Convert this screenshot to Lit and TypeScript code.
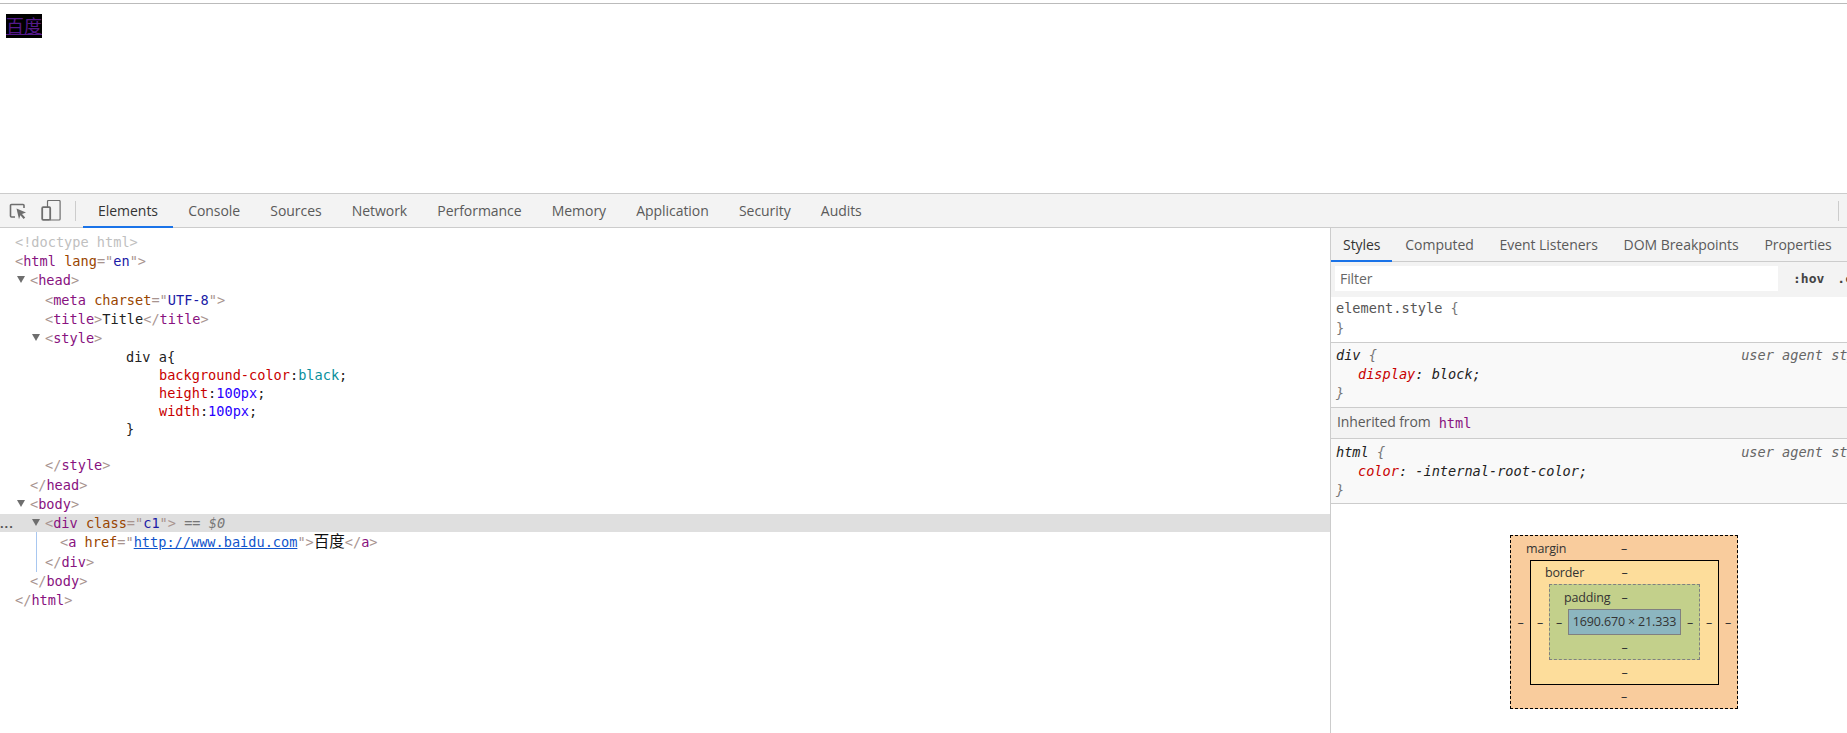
import { LitElement, html, css } from "lit";
import { customElement } from "lit/decorators.js";

const tag = (s: string) => html`<span class="b">&lt;</span><span class="n">${s}</span><span class="b">&gt;</span>`;
const end = (s: string) => html`<span class="b">&lt;/</span><span class="n">${s}</span><span class="b">&gt;</span>`;
const attr = (n: string, v: string) => html` <span class="an">${n}</span><span class="b">="</span><span class="av">${v}</span><span class="b">"</span>`;
const arrow = html`<i class="arrow"></i>`;

@customElement("app-root")
export class AppRoot extends LitElement {
  static styles = css`
    :host { display: block; height: 733px; overflow: hidden; background: #fff; font-family: "Open Sans", "Noto Sans", sans-serif; }
    .rule { margin-top: 3px; height: 1px; background: #bbb; }
    .page { height: 189px; padding: 10px 0 0 6px; box-sizing: border-box; }
    .link { display: inline-block; height: 24px; background: #000; color: #551a8b; text-decoration: underline; font: 18px/23px "Noto Sans CJK SC", sans-serif; }
    .toolbar { height: 35px; box-sizing: border-box; border-top: 1px solid #ccc; border-bottom: 1px solid #ccc; background: #f3f3f3; display: flex; align-items: stretch; }
    .icons { display: flex; align-items: center; gap: 14px; padding-left: 9px; width: 75px; box-sizing: border-box; }
    .sep { width: 1px; height: 20px; background: #ccc; align-self: center; }
    .tabs { display: flex; }
    .main-tabs { margin-left: 7px; flex: 1; }
    .tab { font-size: 14px; color: #5a5a5a; display: flex; align-items: center; box-sizing: border-box; border-bottom: 2px solid transparent; margin-bottom: -1px; white-space: nowrap; letter-spacing: -0.05px; }
    .main-tabs .tab { padding: 0 15.1px; }
    .tab.on { color: #333; border-bottom-color: #1a73e8; }
    .end-sep { margin-right: 8px; }
    .body { display: flex; height: 506px; }
    .tree { width: 1330px; flex: none; padding-top: 5px; box-sizing: border-box; font: 13.6px/19px "DejaVu Sans Mono", "Noto Sans CJK SC", monospace; color: #222; white-space: nowrap; }
    .r { height: 19.2px; line-height: 19.2px; padding-left: var(--p, 15px); position: relative; }
    .x { height: 18px; line-height: 18px; }
    .blank { height: 18.2px; }
    .sel { background: #dfdfdf; height: 18px; line-height: 18px; }
    .a2 { height: 20.8px; line-height: 20.8px; }
    .p1 { --p: 30px; }
    .p2 { --p: 45px; }
    .p3 { --p: 60px; }
    .p4 { --p: 126px; }
    .p5 { --p: 159px; }
    .guide { border-left: 1px solid #a8c7f0; margin-left: 36px; }
    .guide .r { padding-left: calc(var(--p) - 37px); }
    .arrow { position: absolute; width: 0; height: 0; border-left: 4.5px solid transparent; border-right: 4.5px solid transparent; border-top: 7px solid #6e6e6e; margin-left: -13px; margin-top: 5px; }
    .dots { position: absolute; left: 0; top: 1px; color: #555; font: bold 13px/18px "Liberation Sans", sans-serif; letter-spacing: 1px; }
    .b { color: #a8948f; }
    .n { color: #881280; }
    .an { color: #994500; }
    .av { color: #1a1aa6; }
    .link2 { color: #1155cc; text-decoration: underline; }
    .dt { color: #c0c0c0; }
    .prop { color: #c80000; }
    .colr { color: #0a8f9c; }
    .num { color: #2a00ff; }
    .eq { color: #777; font-style: italic; }
    .cjk { color: #111; font-size: 15.5px; }
    .side { flex: none; width: 517px; border-left: 1px solid #ccc; overflow: hidden; box-sizing: border-box; }
    .inner { width: 587px; }
    .stabs { height: 34px; background: #f3f3f3; border-bottom: 1px solid #ccc; box-sizing: border-box; }
    .stabs .tab { padding: 0 12.9px; height: 34px; }
    .stabs .tab:first-child { padding: 0 12px; }
    .filter { height: 35px; background: #f3f3f3; box-sizing: border-box; padding: 4px 0 6px 4px; display: flex; align-items: stretch; }
    .input { width: 443px; background: #fff; color: #666; font-size: 14px; padding-left: 5px; box-sizing: border-box; line-height: 26px; letter-spacing: -0.1px; }
    .hov { margin-left: 15px; font: bold 13px/26px "DejaVu Sans Mono", monospace; color: #444; white-space: nowrap; word-spacing: 5px; }
    .sec { font: 13.6px/19px "DejaVu Sans Mono", monospace; color: #222; padding: 2px 5px 3px 5px; border-bottom: 1px solid #ccc; box-sizing: border-box; white-space: nowrap; }
    .first { height: 46px; padding-top: 2px; color: #555; }
    .first .brace:last-child { margin-top: 1px; }
    .ua { background: #f9f9f9; font-style: italic; height: 65px; padding-top: 3px; }
    .ua.last { padding-top: 4px; }
    .head { display: flex; justify-content: space-between; }
    .src { color: #666; }
    .brace { color: #777; }
    .decl { padding-left: 22px; }
    .inh { height: 31px; background: #f3f3f3; border-bottom: 1px solid #ccc; box-sizing: border-box; color: #5a5a5a; font-size: 14px; line-height: 28px; padding-left: 6px; display: flex; gap: 8px; letter-spacing: -0.1px; }
    .inh span { font: 13.6px/31px "DejaVu Sans Mono", monospace; color: #881280; letter-spacing: 0; }
    .boxwrap { display: flex; justify-content: flex-start; padding: 31px 0 0 179px; }
    .bm { display: grid; grid-template-columns: 18px 1fr 18px; grid-template-rows: 24px auto 1fr; font-size: 12.5px; color: #333; text-align: center; align-items: center; justify-items: stretch; letter-spacing: -0.15px; box-sizing: border-box; }
    .top { grid-column: 1 / 4; display: grid; grid-template-columns: 1fr auto 1fr; text-align: left; }
    .top span:first-child { padding-left: 14px; }
    .bot { grid-column: 1 / 4; }
    .margin { background: #f9cc9d; border: 1px dashed #000; width: 228px; height: 174px; grid-template-columns: 19px 1fr 18px; }
    .margin > .top span:first-child { padding-left: 15px; }
    .border { background: #fddd9b; border: 1px solid #000; width: 189px; height: 125px; grid-template-rows: 23px auto 1fr; }
    .padding { background: #c3d08b; border: 1px dashed #808080; width: 151px; height: 76px; }
    .content { background: #8cb6c0; border: 1px solid #808080; width: 113px; height: 26px; line-height: 24px; box-sizing: border-box; white-space: nowrap; }
  `;

  render() {
    return html`
      <div class="rule"></div>
      <div class="page"><span class="link">百度</span></div>
      <div class="toolbar">
        <div class="icons">
          <svg width="18" height="20" viewBox="0 0 18 20" fill="none">
            <path d="M6 16H2.5a1 1 0 0 1-1-1V4.5a1 1 0 0 1 1-1H14a1 1 0 0 1 1 1V7" stroke="#6e6e6e" stroke-width="1.6"/>
            <path d="M7.5 7.5l9.5 4-4 1.4 3.2 3.5-1.6 1.5-3.2-3.6-1.4 3.9z" fill="#6e6e6e"/>
          </svg>
          <svg width="20" height="21" viewBox="0 0 20 21" fill="none">
            <path d="M6.5 7V1.5a1 1 0 0 1 1-1h10.6a1 1 0 0 1 1 1v17.5a1 1 0 0 1-1 1H9" stroke="#6e6e6e" stroke-width="1.2"/>
            <rect x="1.2" y="7.2" width="8" height="12.6" rx="1" stroke="#6e6e6e" stroke-width="1.8"/>
          </svg>
        </div>
        <div class="sep"></div>
        <div class="tabs main-tabs">
          ${["Elements", "Console", "Sources", "Network", "Performance", "Memory", "Application", "Security", "Audits"].map(
            (t, i) => html`<div class="tab ${i === 0 ? "on" : ""}">${t}</div>`
          )}
        </div>
        <div class="sep end-sep"></div>
      </div>
      <div class="body">
        <div class="tree">
          <div class="r dt">&lt;!doctype html&gt;</div>
          <div class="r"><span class="b">&lt;</span><span class="n">html</span>${attr("lang", "en")}<span class="b">&gt;</span></div>
          <div class="r p1">${arrow}${tag("head")}</div>
          <div class="r p2"><span class="b">&lt;</span><span class="n">meta</span>${attr("charset", "UTF-8")}<span class="b">&gt;</span></div>
          <div class="r p2">${tag("title")}Title${end("title")}</div>
          <div class="r p2">${arrow}${tag("style")}</div>
          <div class="r x p4">div a{</div>
          <div class="r x p5"><span class="prop">background-color</span>:<span class="colr">black</span>;</div>
          <div class="r x p5"><span class="prop">height</span>:<span class="num">100px</span>;</div>
          <div class="r x p5"><span class="prop">width</span>:<span class="num">100px</span>;</div>
          <div class="r x p4">}</div>
          <div class="blank"></div>
          <div class="r p2">${end("style")}</div>
          <div class="r p1">${end("head")}</div>
          <div class="r p1">${arrow}${tag("body")}</div>
          <div class="r p2 sel"><span class="dots">...</span>${arrow}<span class="b">&lt;</span><span class="n">div</span>${attr("class", "c1")}<span class="b">&gt;</span> <span class="eq">== $0</span></div>
          <div class="guide">
            <div class="r p3 a2"><span class="b">&lt;</span><span class="n">a</span> <span class="an">href</span><span class="b">="</span><span class="link2">http://www.baidu.com</span><span class="b">"&gt;</span><span class="cjk">百度</span>${end("a")}</div>
            <div class="r p2">${end("div")}</div>
          </div>
          <div class="r p1">${end("body")}</div>
          <div class="r">${end("html")}</div>
        </div>
        <div class="side">
          <div class="inner">
            <div class="tabs stabs">
              ${["Styles", "Computed", "Event Listeners", "DOM Breakpoints", "Properties"].map(
                (t, i) => html`<div class="tab ${i === 0 ? "on" : ""}">${t}</div>`
              )}
            </div>
            <div class="filter"><div class="input">Filter</div><div class="hov">:hov .cls</div></div>
            <div class="sec first">
              <div>element.style <span class="brace">{</span></div>
              <div class="brace">}</div>
            </div>
            <div class="sec ua">
              <div class="head"><span>div <span class="brace">{</span></span><span class="src">user agent stylesheet</span></div>
              <div class="decl"><span class="prop">display</span>: block;</div>
              <div class="brace">}</div>
            </div>
            <div class="inh">Inherited from <span>html</span></div>
            <div class="sec ua last">
              <div class="head"><span>html <span class="brace">{</span></span><span class="src">user agent stylesheet</span></div>
              <div class="decl"><span class="prop">color</span>: -internal-root-color;</div>
              <div class="brace">}</div>
            </div>
            <div class="boxwrap">
              <div class="bm margin">
                <div class="top"><span>margin</span><span>–</span><span></span></div>
                <div>–</div>
                <div class="bm border">
                  <div class="top"><span>border</span><span>–</span><span></span></div>
                  <div>–</div>
                  <div class="bm padding">
                    <div class="top"><span>padding</span><span>–</span><span></span></div>
                    <div>–</div>
                    <div class="content">1690.670 × 21.333</div>
                    <div>–</div>
                    <div class="bot">–</div>
                  </div>
                  <div>–</div>
                  <div class="bot">–</div>
                </div>
                <div>–</div>
                <div class="bot">–</div>
              </div>
            </div>
          </div>
        </div>
      </div>
    `;
  }
}
